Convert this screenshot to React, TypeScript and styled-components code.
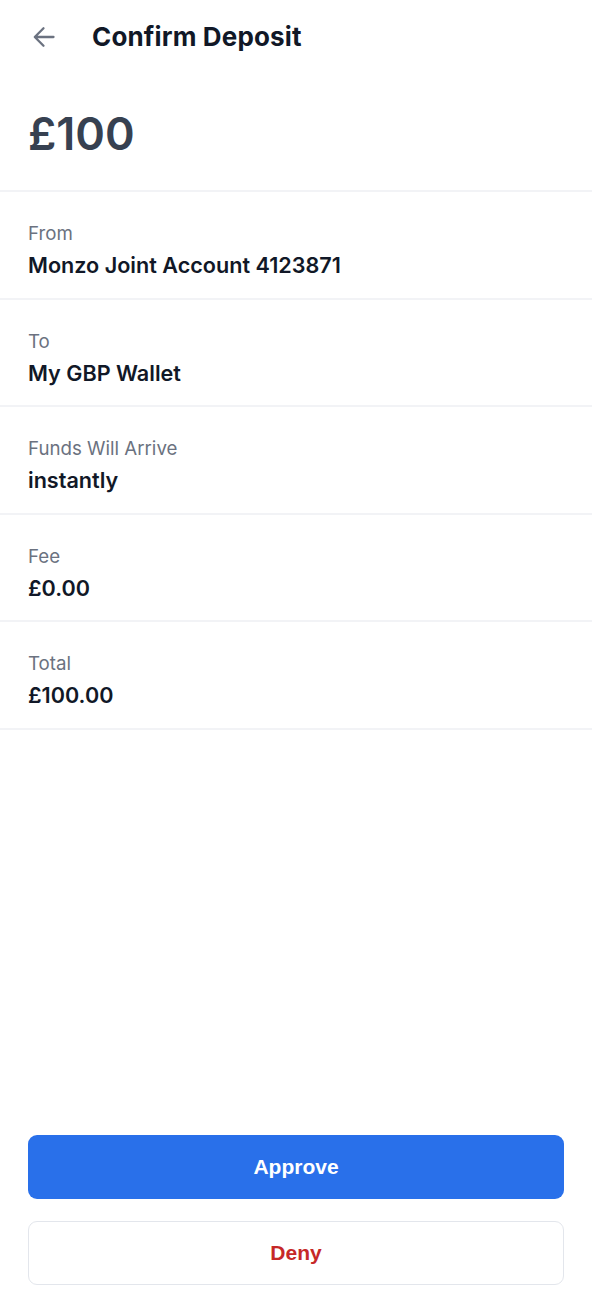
import React from "react";
import styled, { createGlobalStyle } from "styled-components";

const GlobalStyle = createGlobalStyle`
  html, body {
    margin: 0;
    padding: 0;
    background: #ffffff;
  }
  * { box-sizing: border-box; }
`;

const Page = styled.div`
  width: 592px;
  height: 100vh;
  min-height: 1312px;
  display: flex;
  flex-direction: column;
  background: #ffffff;
  font-family: Inter, "Noto Sans", sans-serif;
  color: #111827;
`;

const Header = styled.header`
  height: 74px;
  display: flex;
  align-items: center;
  padding: 0 28px 0 33px;
  gap: 37px;
`;

const BackButton = styled.button`
  width: 22px;
  height: 22px;
  padding: 0;
  border: none;
  background: none;
  display: flex;
  align-items: center;
  justify-content: center;
  color: #6b7280;
  cursor: pointer;
`;

const Title = styled.h1`
  margin: 0;
  font-size: 26px;
  line-height: 32px;
  font-weight: 700;
  color: #111827;
  letter-spacing: 0.15px;
`;

const AmountSection = styled.section`
  padding: 32px 28px 28px;
  border-bottom: 2px solid #f2f3f6;
`;

const Amount = styled.div`
  font-size: 45px;
  line-height: 56px;
  font-weight: 600;
  color: #374151;
`;

const DetailRow = styled.div`
  padding: 28px 28px 15.6px;
  border-bottom: 2px solid #f2f3f6;
  display: flex;
  flex-direction: column;
  gap: 2px;
`;

const Label = styled.div`
  font-size: 18.7px;
  line-height: 27px;
  font-weight: 400;
  color: #6b7280;
`;

const Value = styled.div`
  font-size: 21.6px;
  line-height: 33px;
  font-weight: 600;
  color: #111827;
`;

const Spacer = styled.div`
  flex: 1;
`;

const Footer = styled.footer`
  display: flex;
  flex-direction: column;
  gap: 22px;
  padding: 0 28px 27px;
`;

const ActionButton = styled.button<{ $variant: "primary" | "secondary" }>`
  height: 64px;
  width: 100%;
  border-radius: 9px;
  font-family: "Liberation Sans", Arial, sans-serif;
  font-size: 21px;
  font-weight: 700;
  cursor: pointer;
  display: flex;
  align-items: center;
  justify-content: center;
  background: ${(p) => (p.$variant === "primary" ? "#2970ea" : "#ffffff")};
  color: ${(p) => (p.$variant === "primary" ? "#ffffff" : "#c62828")};
  border: ${(p) =>
    p.$variant === "primary" ? "none" : "1.5px solid #e3e6ec"};
`;

const ArrowLeft = () => (
  <svg width="22" height="22" viewBox="0 0 22 22" fill="none">
    <path
      d="M20.5 11H2M10.5 2.2L1.8 11l8.7 8.8"
      stroke="currentColor"
      strokeWidth="2.3"
      strokeLinecap="round"
      strokeLinejoin="round"
    />
  </svg>
);

const details: { label: string; value: string }[] = [
  { label: "From", value: "Monzo Joint Account 4123871" },
  { label: "To", value: "My GBP Wallet" },
  { label: "Funds Will Arrive", value: "instantly" },
  { label: "Fee", value: "£0.00" },
  { label: "Total", value: "£100.00" },
];

export default function App() {
  return (
    <>
      <GlobalStyle />
      <Page>
        <Header>
          <BackButton aria-label="Back">
            <ArrowLeft />
          </BackButton>
          <Title>Confirm Deposit</Title>
        </Header>
        <AmountSection>
          <Amount>£100</Amount>
        </AmountSection>
        {details.map((d) => (
          <DetailRow key={d.label}>
            <Label>{d.label}</Label>
            <Value>{d.value}</Value>
          </DetailRow>
        ))}
        <Spacer />
        <Footer>
          <ActionButton $variant="primary">Approve</ActionButton>
          <ActionButton $variant="secondary">Deny</ActionButton>
        </Footer>
      </Page>
    </>
  );
}
